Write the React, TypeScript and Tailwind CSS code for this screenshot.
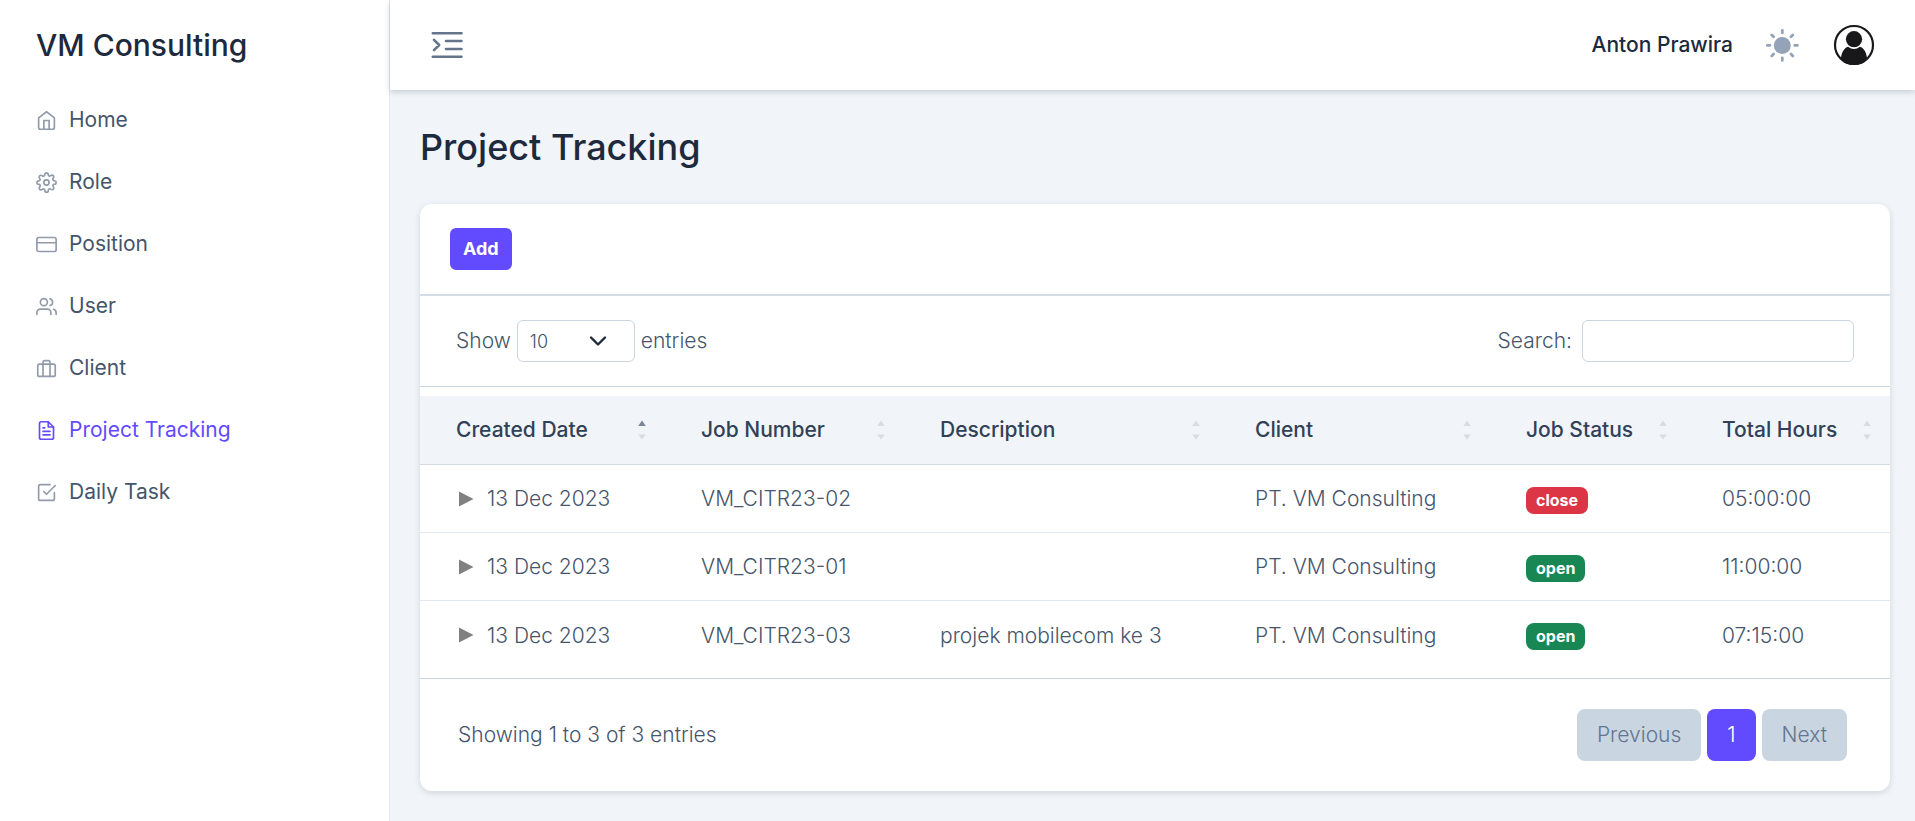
import { useState } from "react";
import type { ReactNode } from "react";
import {
  FiBriefcase,
  FiCheckSquare,
  FiCreditCard,
  FiFileText,
  FiHome,
  FiSettings,
  FiUsers,
} from "react-icons/fi";
import type { IconType } from "react-icons";

type NavItem = { label: string; icon: IconType; active?: boolean };

const navItems: NavItem[] = [
  { label: "Home", icon: FiHome },
  { label: "Role", icon: FiSettings },
  { label: "Position", icon: FiCreditCard },
  { label: "User", icon: FiUsers },
  { label: "Client", icon: FiBriefcase },
  { label: "Project Tracking", icon: FiFileText, active: true },
  { label: "Daily Task", icon: FiCheckSquare },
];

type Column = { label: string; width: string; sorted?: boolean };

const columns: Column[] = [
  { label: "Created Date", width: "w-[245px]", sorted: true },
  { label: "Job Number", width: "w-[239px]" },
  { label: "Description", width: "w-[315px]" },
  { label: "Client", width: "w-[271px]" },
  { label: "Job Status", width: "w-[196px]" },
  { label: "Total Hours", width: "w-[204px]" },
];

type Project = {
  date: string;
  job: string;
  description: string;
  client: string;
  status: "open" | "close";
  hours: string;
};

const projects: Project[] = [
  { date: "13 Dec 2023", job: "VM_CITR23-02", description: "", client: "PT. VM Consulting", status: "close", hours: "05:00:00" },
  { date: "13 Dec 2023", job: "VM_CITR23-01", description: "", client: "PT. VM Consulting", status: "open", hours: "11:00:00" },
  { date: "13 Dec 2023", job: "VM_CITR23-03", description: "projek mobilecom ke 3", client: "PT. VM Consulting", status: "open", hours: "07:15:00" },
];

function Sidebar() {
  return (
    <aside className="w-[390px] shrink-0 border-r border-slate-200 bg-white">
      <div className="flex h-[90px] items-center px-9 text-[30px] font-medium text-slate-800">
        VM Consulting
      </div>
      <nav aria-label="Main" className="-mt-px">
        <ul>
          {navItems.map(({ label, icon: Icon, active }) => (
            <li key={label}>
              <a
                href="#"
                aria-current={active ? "page" : undefined}
                className={`flex h-[62px] items-center gap-3 px-9 text-[21px] ${active ? "text-[#624bff]" : "text-slate-600"}`}
              >
                <Icon
                  size={21}
                  strokeWidth={1.9}
                  className={active ? "text-[#624bff]" : "text-[#919bab]"}
                />
                {label}
              </a>
            </li>
          ))}
        </ul>
      </nav>
    </aside>
  );
}

function TopBar() {
  return (
    <header className="relative flex h-[90px] items-center justify-between bg-white pr-10 pl-10 shadow-[0_2px_6px_rgba(30,41,59,0.2)]">
      <button type="button" aria-label="Toggle sidebar">
        <svg
          width="36"
          height="36"
          viewBox="0 0 36 36"
          fill="none"
          stroke="#64748b"
          strokeWidth="2.6"
          strokeLinecap="round"
          strokeLinejoin="round"
        >
          <path d="M2.800 6.200h28.700M16 14h15.500M16 22h15.500M2.800 29.800h28.700M4 12.800l5.200 5.200-5.200 5.200" />
        </svg>
      </button>
      <div className="flex items-center">
        <span className="text-[21px] font-medium text-slate-800">Anton Prawira</span>
        <button type="button" aria-label="Toggle theme" className="ml-8">
          <svg width="34" height="34" viewBox="0 0 34 34" fill="none" stroke="#94a3b8" strokeWidth="2.8" strokeLinecap="round">
            <circle cx="17.300" cy="17.400" r="8.500" fill="#94a3b8" stroke="none" />
            <path d="M17.300 2.300v2.600M17.300 29.800v2.600M2.300 17.400h2.600M29.800 17.400h2.600M6.800 6.900l1.800 1.800M26 26.100l1.800 1.800M6.800 27.900l1.800-1.800M26 8.700l1.800-1.800" />
          </svg>
        </button>
        <button type="button" aria-label="Account" className="ml-[34px]">
          <svg width="42" height="42" viewBox="0 0 42 42">
            <defs>
              <clipPath id="avatar">
                <circle cx="21" cy="21" r="20" />
              </clipPath>
            </defs>
            <circle cx="21" cy="21" r="19" fill="white" stroke="#18181b" strokeWidth="2.2" />
            <g clipPath="url(#avatar)" fill="#18181b">
              <circle cx="21" cy="15.200" r="8.100" />
              <path d="M8 34C8.600 28 11.500 23.800 15 22.800Q21 27.400 27 22.800C30.500 23.800 33.400 28 34 34L30 41H12Z" />
            </g>
          </svg>
        </button>
      </div>
    </header>
  );
}

function SortMark({ sorted }: { sorted?: boolean }) {
  return (
    <svg width="8" height="20" viewBox="0 0 8 20" className="shrink-0">
      <path d="M4 0.500L7.800 6H0.200Z" fill={sorted ? "#7d8694" : "#d9dde3"} />
      <path d="M4 19.500L7.800 14.500H0.200Z" fill="#d9dde3" />
    </svg>
  );
}

function Cell({ children }: { children?: ReactNode }) {
  return <td className="pt-0.5 pl-9">{children}</td>;
}

function ProjectTable() {
  return (
    <table className="mt-[9px] w-full table-fixed border-collapse text-left">
      <thead className="bg-slate-100">
        <tr className="h-[68px] border-b border-[#d3dae2]">
          {columns.map((column) => (
            <th key={column.label} scope="col" className={`${column.width} pr-[19px] pl-9 font-medium text-slate-700`}>
              <button type="button" className="flex w-full items-center justify-between">
                {column.label}
                <SortMark sorted={column.sorted} />
              </button>
            </th>
          ))}
        </tr>
      </thead>
      <tbody className="divide-y divide-slate-200">
        {projects.map((project) => (
          <tr key={project.job} className="h-[68px]">
            <Cell>
              <button type="button" className="flex items-center gap-3">
                <svg width="19" height="16" viewBox="0 0 19 16">
                  <path d="M3 0.500L17.500 8L3 15.500Z" fill="#808080" />
                </svg>
                {project.date}
              </button>
            </Cell>
            <Cell>{project.job}</Cell>
            <Cell>{project.description}</Cell>
            <Cell>{project.client}</Cell>
            <Cell>
              <span
                className={`mt-0.5 block w-fit rounded-lg px-[10px] text-[16px] leading-[27px] font-bold text-white ${project.status === "open" ? "bg-[#198754]" : "bg-[#dc3545]"}`}
              >
                {project.status}
              </span>
            </Cell>
            <Cell>{project.hours}</Cell>
          </tr>
        ))}
      </tbody>
    </table>
  );
}

export default function App() {
  const [query, setQuery] = useState("");

  return (
    <div className="flex min-h-screen bg-slate-100 font-['Inter',sans-serif] text-[21px] text-slate-600">
      <Sidebar />
      <div className="min-w-0 flex-1">
        <TopBar />
        <main className="pt-8 pr-[25px] pb-[30px] pl-[30px]">
          <h1 className="text-[36px] leading-[50px] font-medium text-slate-800">Project Tracking</h1>
          <section className="mt-8 rounded-xl bg-white font-light shadow-[0_2px_6px_rgba(30,41,59,0.15)]">
            <div className="border-b-2 border-[#d3dce7] px-[30px] py-6">
              <button
                type="button"
                className="block h-[42px] rounded-md bg-[#624bff] px-[13px] pb-0.5 text-[18px] font-bold text-white"
              >
                Add
              </button>
            </div>
            <div className="flex items-center justify-between border-b border-slate-300 py-6 pr-9 pl-9">
              <div className="flex items-center gap-[6px]">
                <label htmlFor="page-length">Show</label>
                <span className="relative">
                  <select
                    id="page-length"
                    className="block h-[42px] w-[118px] appearance-none rounded-md border border-slate-300 bg-white px-3 text-[18px]"
                  >
                    <option>10</option>
                  </select>
                  <svg
                    className="pointer-events-none absolute top-3 right-7"
                    width="18"
                    height="18"
                    viewBox="0 0 18 18"
                    fill="none"
                    stroke="#1e293b"
                    strokeWidth="2.4"
                    strokeLinecap="round"
                    strokeLinejoin="round"
                  >
                    <path d="M2 5.500l7 7 7-7" />
                  </svg>
                </span>
                <span>entries</span>
              </div>
              <div className="flex items-center gap-[10px]">
                <label htmlFor="search">Search:</label>
                <input
                  id="search"
                  type="search"
                  value={query}
                  onChange={(event) => setQuery(event.target.value)}
                  className="block h-[42px] w-[272px] rounded-md border border-slate-300 bg-white px-3 text-[18px]"
                />
              </div>
            </div>
            <ProjectTable />
            <div className="mt-[10px] flex items-center justify-between border-t border-slate-300 py-[30px] pr-[43px] pl-[38px]">
              <p>Showing 1 to 3 of 3 entries</p>
              <div className="flex gap-[6px]">
                <button type="button" className="h-[52px] rounded-lg bg-slate-300 px-5 text-slate-500">
                  Previous
                </button>
                <button type="button" aria-current="page" className="h-[52px] rounded-lg bg-[#624bff] px-5 text-white">
                  1
                </button>
                <button type="button" className="h-[52px] rounded-lg bg-slate-300 px-5 text-slate-500">
                  Next
                </button>
              </div>
            </div>
          </section>
        </main>
      </div>
    </div>
  );
}
